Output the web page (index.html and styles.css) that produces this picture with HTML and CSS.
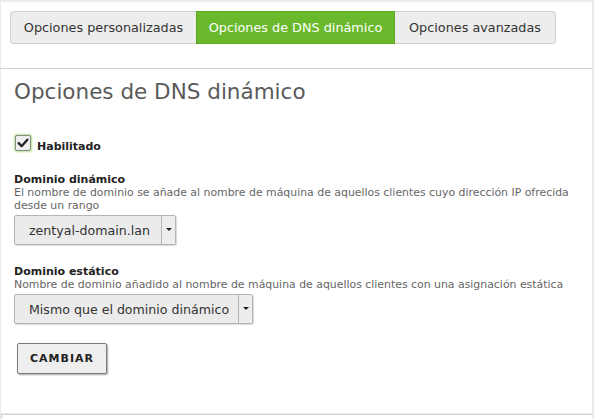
FILE: index.html
```html
<!DOCTYPE html>
<html lang="es">
<head>
<meta charset="utf-8">
<title>Opciones de DNS dinámico</title>
<link rel="stylesheet" href="styles.css">
</head>
<body>
<div class="frame">
  <div class="panel">
    <div class="tabbar">
      <nav class="tabs">
        <a class="tab first">Opciones personalizadas</a>
        <a class="tab active">Opciones de DNS dinámico</a>
        <a class="tab last">Opciones avanzadas</a>
      </nav>
    </div>
    <div class="content">
      <h1 class="title">Opciones de DNS dinámico</h1>
      <div class="check-row">
        <span class="checkbox">
          <svg viewBox="0 0 16 16" width="14" height="14"><path d="M3 8.2 L6.4 11.6 L13 4.2" fill="none" stroke="#222" stroke-width="2.6" stroke-linecap="round" stroke-linejoin="round"/></svg>
        </span>
        <span class="check-label">Habilitado</span>
      </div>
      <div class="field">
        <div class="label">Dominio dinámico</div>
        <div class="desc">El nombre de dominio se añade al nombre de máquina de aquellos clientes cuyo dirección IP ofrecida desde un rango</div>
        <div class="select s1"><span class="sel-text">zentyal-domain.lan</span><span class="sel-arrow"></span></div>
      </div>
      <div class="field">
        <div class="label">Dominio estático</div>
        <div class="desc">Nombre de dominio añadido al nombre de máquina de aquellos clientes con una asignación estática</div>
        <div class="select s2"><span class="sel-text">Mismo que el dominio dinámico</span><span class="sel-arrow"></span></div>
      </div>
      <button class="btn">CAMBIAR</button>
    </div>
  </div>
  <div class="next"></div>
</div>
</body>
</html>
```
FILE: styles.css
```css
html, body {
  margin: 0;
  padding: 0;
  background: #ebebeb;
  font-family: "DejaVu Sans", Verdana, sans-serif;
}
.frame {
  width: 594px;
  height: 419px;
  overflow: hidden;
  padding: 2px 2px 0 1px;
  box-sizing: border-box;
}
.panel {
  background: #fff;
  height: 411px;
}
.tabbar {
  padding: 9px 0 0 10px;
  height: 57px;
  border-bottom: 1px solid #cfcfcf;
  margin-left: -1px;
}
.tabs {
  display: flex;
  height: 33px;
}
.tab {
  display: flex;
  align-items: center;
  justify-content: center;
  white-space: nowrap;
  box-sizing: border-box;
  height: 33px;
  padding: 0;
  font-size: 12.8px;
  color: #333;
  background: #ededed;
  border: 1px solid #d0d0d0;
}
.tab.first {
  border-radius: 4px 0 0 4px;
  border-right: none;
  width: 186px;
}
.tab.active {
  background: #6ab92c;
  border-color: #5fa824;
  color: #fff;
  width: 199px;
}
.tab.last {
  border-left: none;
  border-radius: 0 4px 4px 0;
  width: 161px;
}
.content {
  padding: 0 14px 0 13px;
}
.title {
  margin: 11px 0 0 0;
  font-size: 21.5px;
  font-weight: normal;
  color: #5a5a5a;
  line-height: 24px;
}
.check-row {
  display: flex;
  align-items: center;
  margin-top: 30px;
  height: 18px;
}
.checkbox {
  width: 16px;
  height: 16px;
  box-sizing: border-box;
  border: 1px solid #8a8a8a;
  border-radius: 2px;
  background: #efefef;
  box-shadow: 0 0 2px 1px #b6e28f;
  display: flex;
  align-items: center;
  justify-content: center;
  margin-left: 1px;
}
.check-label {
  font-size: 11px;
  font-weight: bold;
  color: #222;
  margin-left: 6px;
  margin-top: 6px;
}
.field {
  margin-top: 21px;
}
.field + .field {
  margin-top: 20px;
}
.label {
  font-size: 11px;
  font-weight: bold;
  color: #222;
  line-height: 13px;
}
.desc {
  font-size: 10.9px;
  color: #666;
  line-height: 13px;
}
.select {
  display: flex;
  margin-top: 3px;
  height: 30px;
  box-sizing: border-box;
  border: 1px solid #b5b5b5;
  border-radius: 2px;
  background: #ebebeb;
  font-size: 12.6px;
  color: #333;
  box-shadow: 1px 1px 1px rgba(0,0,0,0.15);
}
.select.s1 { width: 162px; }
.select.s2 { width: 239px; margin-top: 3px; }
.sel-text {
  flex: 1;
  display: flex;
  align-items: center;
  padding-left: 14px;
}
.sel-arrow {
  width: 13px;
  border-left: 1px solid #b5b5b5;
  background: #ededed;
  position: relative;
}
.sel-arrow::after {
  content: "";
  position: absolute;
  left: 4px;
  top: 12px;
  border-left: 3px solid transparent;
  border-right: 3px solid transparent;
  border-top: 3px solid #222;
}
.btn {
  display: block;
  margin: 19px 0 0 3px;
  width: 90px;
  height: 31px;
  font-family: "DejaVu Sans", Verdana, sans-serif;
  font-size: 11px;
  font-weight: bold;
  letter-spacing: 1px;
  color: #222;
  background: #eeeeee;
  border: 1px solid #7a7a7a;
  border-radius: 2px;
  box-shadow: 1px 1px 2px rgba(0,0,0,0.35);
  padding: 0;
}
.next {
  height: 10px;
  background: #fff;
  border-top: 1px solid #d2d2d2;
  border-left: 1px solid #d2d2d2;
  margin-top: 1px;
}
```
